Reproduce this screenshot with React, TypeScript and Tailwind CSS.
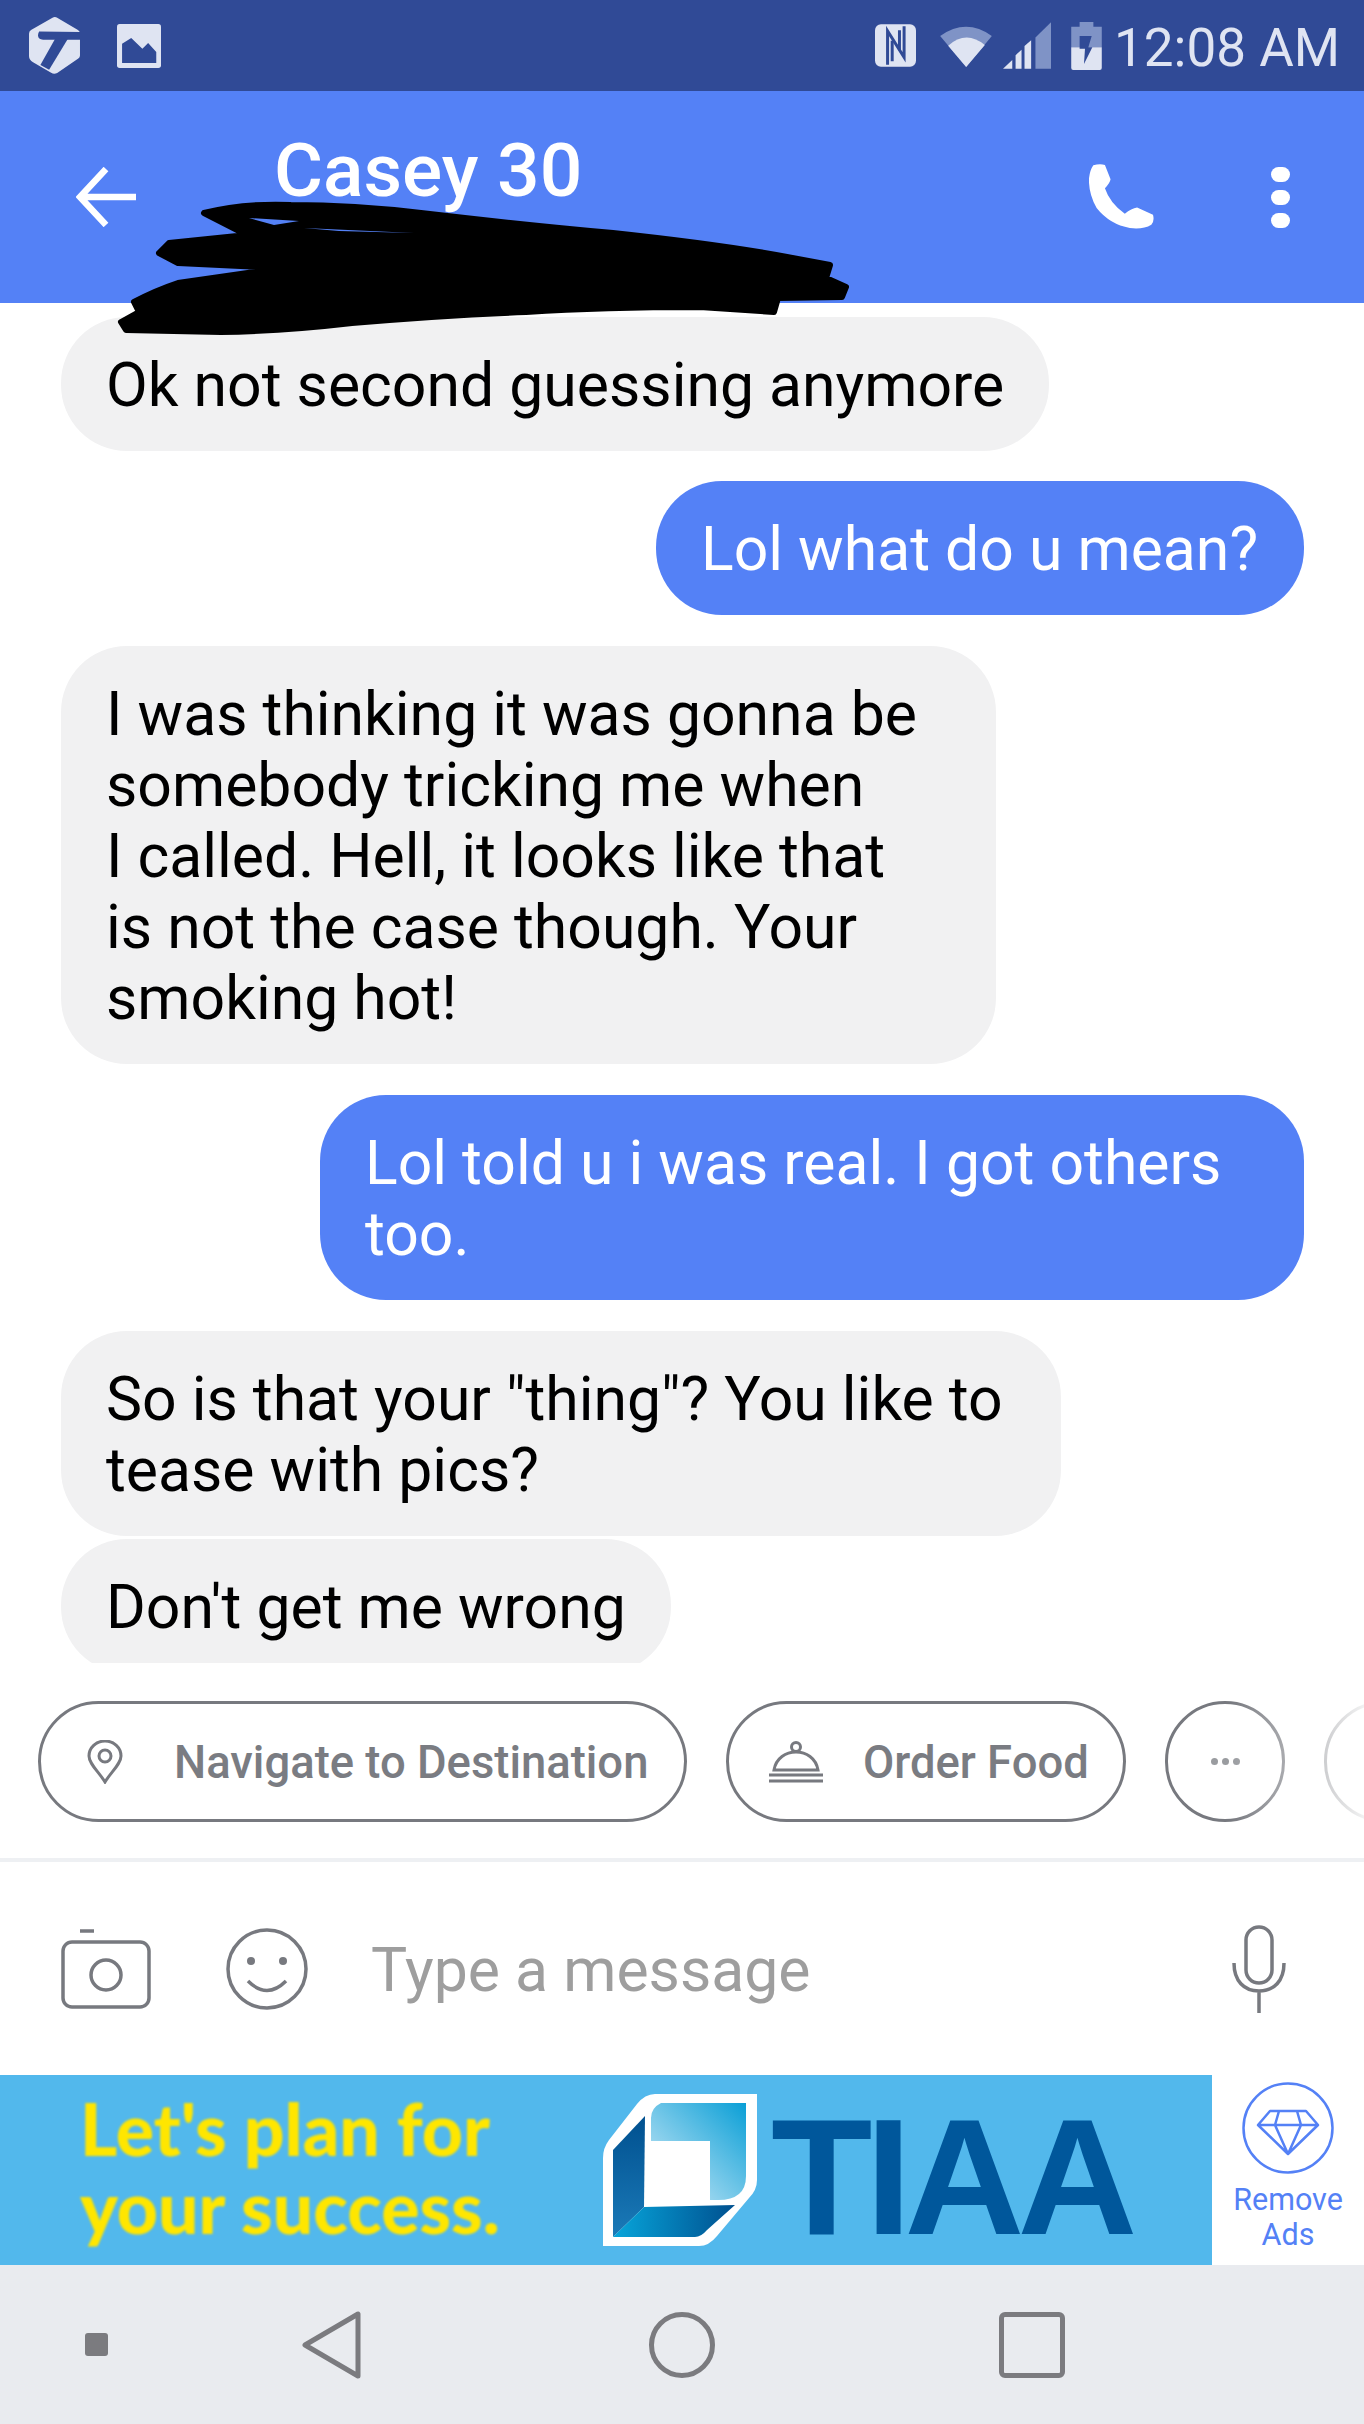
const FONT = "font-['Roboto',sans-serif]";

function StatusBar() {
  return (
    <div className="flex h-[91px] items-center justify-between bg-[#304a96] pl-[29px] pr-[24px] text-[#dfe4f2]">
      <div className="flex items-center gap-[37px]">
        <svg width="51" height="57" viewBox="58 35 152 170">
          <path d="M128 37 Q135 33 142 37 L204 74 Q210 78 210 85 V150 Q210 156 205 159 L142 202 Q132 207 124 201 L70 170 Q58 163 58 152 V85 Q58 78 64 74 Z" fill="#dfe4f2" />
          <path d="M88 78 Q78 100 100 103 H214 V80 Z" fill="#304a96" />
          <path d="M136 100 H174 L118 192 L92 178 Z" fill="#304a96" />
        </svg>
        <svg width="44" height="44" viewBox="0 0 130 130">
          <rect width="130" height="130" rx="8" fill="#dfe4f2" />
          <path d="M15 58 L42 41 L75 73 L92 56 L116 83 V115 H15 Z" fill="#304a96" />
        </svg>
      </div>
      <div className="flex items-center">
        <svg width="41" height="43" viewBox="0 0 124 128" fill="none" className="mr-[24px]">
          <rect width="124" height="128" rx="18" fill="#dfe4f2" />
          <path d="M38 122 V20 L88 100 V6" stroke="#304a96" strokeWidth="9" />
          <path d="M52 112 V50 M74 18 V78" stroke="#304a96" strokeWidth="9" />
        </svg>
        <svg width="52" height="42" viewBox="0 0 155 126" className="mr-[11px]">
          <path d="M0 33 Q78 -22 155 33 L78 126 Z" fill="#7f93c6" />
          <path d="M24 62 Q78 14 134 60 L78 126 Z" fill="#dfe4f2" />
        </svg>
        <svg width="48" height="47" viewBox="0 0 145 141" className="mr-[20px]">
          <path d="M145 0 V141 H98 V46 Z" fill="#7f93c6" />
          <path d="M0 141 L28 114 V141 Z M38 100 L56 83 V141 H38 Z M65 72 L85 55 V141 H65 Z" fill="#dfe4f2" />
        </svg>
        <svg width="31" height="48" viewBox="0 0 91 143" className="mr-[12px]">
          <path d="M25 0 H66 V14 H91 V75 H0 V14 H25 Z" fill="#7f93c6" />
          <path d="M0 75 H91 V137 Q91 143 85 143 H6 Q0 143 0 137 Z" fill="#dfe4f2" />
          <path d="M25 42 H61 L51 75 H63 L38 125 L41 80 H25 Z" fill="#304a96" />
        </svg>
        <span className={`pt-[5px] text-[53px] leading-none ${FONT}`}>12:08 AM</span>
      </div>
    </div>
  );
}

function Header() {
  return (
    <div className="relative flex h-[212px] items-start bg-[#5481f6] text-white">
      <svg width="60" height="60" viewBox="0 0 60 60" className="ml-[76px] mt-[76px] shrink-0" fill="none" stroke="white" strokeWidth="6.5">
        <path d="M60 30 H5 M30 2 L4 30 L30 58" />
      </svg>
      <div className={`ml-[138px] mt-[36px] text-[75px] font-medium leading-[86px] ${FONT}`}>Casey 30</div>
      <svg width="65" height="65" viewBox="87 72 196 196" fill="white" className="absolute left-[1089px] top-[73px]">
        <path d="M100 76 Q120 70 135 75 L152 118 Q150 130 135 145 Q150 190 195 222 Q215 205 232 203 L280 225 Q285 245 275 255 Q250 270 210 265 Q150 255 110 205 Q85 160 87 115 Q90 90 100 76 Z" />
      </svg>
      <div className="absolute left-[1271px] top-[76px] flex flex-col gap-[8px]">
        <div className="h-[15px] w-[19px] rounded-full bg-white" />
        <div className="h-[15px] w-[19px] rounded-full bg-white" />
        <div className="h-[15px] w-[19px] rounded-full bg-white" />
      </div>
      {/* marker scribble over the subtitle, runs a bit past the header */}
      <svg width="760" height="140" viewBox="0 0 760 140" className="absolute left-[104px] top-[110px]">
        <path
          d="M100 12 Q140 2 187 4 Q250 4 317 12 Q420 24 509 32 Q620 44 683 56 L726 64 L722 77 L742 86 L738 96 L674 97 L670 111 L596 106 Q500 106 422 111 Q340 114 248 122 Q180 130 117 131 L22 129 L17 121 L35 111 L30 101 Q50 90 74 82 L178 67 L74 62 L55 52 L65 42 L143 34 Z"
          fill="black"
          stroke="black"
          strokeWidth="6"
          strokeLinejoin="round"
        />
        <path d="M145 17 L195 20 L170 24 Z M200 27 L310 32 L235 30 Z" fill="#5481f6" />
      </svg>
    </div>
  );
}

function Bubble({ mine, className, children }: { mine?: boolean; className?: string; children: React.ReactNode }) {
  return (
    <div
      className={`whitespace-nowrap rounded-[66px] pb-[30px] pl-[45px] pt-[33px] text-[60.7px] leading-[71px] ${FONT} ${
        mine ? 'self-end bg-[#5481f6] text-white' : 'self-start bg-[#f1f1f2] text-black'
      } ${className ?? ''}`}
    >
      {children}
    </div>
  );
}

function Chat() {
  return (
    <div className="flex h-[1360px] flex-col overflow-hidden bg-white pl-[61px] pr-[60px] pt-[14px]">
      <Bubble className="w-[988px]">Ok not second guessing anymore</Bubble>
      <Bubble mine className="mt-[30px] w-[648px]">Lol what do u mean?</Bubble>
      <Bubble className="mt-[31px] w-[935px]">
        I was thinking it was gonna be<br />
        somebody tricking me when<br />
        I called. Hell, it looks like that<br />
        is not the case though. Your<br />
        smoking hot!
      </Bubble>
      <Bubble mine className="mt-[31px] w-[984px]">
        Lol told u i was real. I got others<br />
        too.
      </Bubble>
      <Bubble className="mt-[31px] w-[1000px]">
        So is that your "thing"? You like to<br />
        tease with pics?
      </Bubble>
      <Bubble className="mt-[3px] w-[610px] shrink-0">Don't get me wrong</Bubble>
    </div>
  );
}

function Chip({ className, children }: { className?: string; children: React.ReactNode }) {
  return (
    <div className={`flex h-[121px] shrink-0 items-center rounded-full border-[3.5px] border-[#77797f] ${className ?? ''}`}>
      {children}
    </div>
  );
}

function Chips() {
  return (
    <div className={`relative flex h-[199px] gap-[39px] overflow-hidden border-b-[4px] border-[#eef0f3] bg-white pl-[38px] pt-[38px] text-[45.4px] font-medium text-[#7a7c82] ${FONT}`}>
      <Chip className="w-[649px] pl-[46px]">
        <svg width="36" height="44" viewBox="0 0 36 44" fill="none" stroke="#77797f" strokeWidth="3" className="mr-[51px] shrink-0">
          <path d="M18 42 C12 32 2 24 2 16 A16 15 0 0 1 34 16 C34 24 24 32 18 42 Z" />
          <circle cx="18" cy="16" r="6" />
        </svg>
        <span className="whitespace-nowrap pt-[3px]">Navigate to Destination</span>
      </Chip>
      <Chip className="w-[400px] pl-[40px]">
        <svg width="54" height="42" viewBox="0 0 54 42" fill="none" stroke="#77797f" strokeWidth="3" className="mr-[40px] shrink-0">
          <circle cx="27" cy="6" r="4.5" />
          <path d="M5 29 C7 17 17 11 27 11 C37 11 47 17 49 29 Z" />
          <path d="M0 34 H54 M0 40 H54" />
        </svg>
        <span className="whitespace-nowrap pt-[3px]">Order Food</span>
      </Chip>
      <div className="flex h-[121px] w-[120px] shrink-0 items-center justify-center gap-[4px] rounded-full border-[3.5px] border-[#77797f]">
        <div className="h-[7px] w-[7px] rounded-full bg-[#9a9ca0]" />
        <div className="h-[7px] w-[7px] rounded-full bg-[#9a9ca0]" />
        <div className="h-[7px] w-[7px] rounded-full bg-[#9a9ca0]" />
      </div>
      <div className="h-[121px] w-[120px] shrink-0 rounded-full border-[3.5px] border-[#77797f]" />
      {/* scroll fade at the right edge */}
      <div className="absolute bottom-0 right-0 top-0 w-[134px] bg-gradient-to-r from-white/0 to-white/90" />
    </div>
  );
}

function InputRow() {
  return (
    <div className={`flex h-[213px] items-center bg-white pl-[61px] ${FONT}`}>
      <svg width="90" height="80" viewBox="0 0 90 80" fill="none" stroke="#77797f" strokeWidth="3.5" className="shrink-0">
        <path d="M19 2 H33" />
        <rect x="2" y="13" width="86" height="65" rx="9" />
        <ellipse cx="45" cy="46" rx="15" ry="15" />
      </svg>
      <svg width="82" height="82" viewBox="0 0 82 82" fill="none" stroke="#77797f" strokeWidth="3.5" className="ml-[75px] shrink-0">
        <circle cx="41" cy="41" r="39" />
        <circle cx="25" cy="33" r="4" fill="#77797f" stroke="none" />
        <circle cx="57" cy="33" r="4" fill="#77797f" stroke="none" />
        <path d="M22 53 Q41 72 60 53" />
      </svg>
      <span className="ml-[63px] pt-[6px] text-[60.7px] leading-none text-[#9e9e9e]">Type a message</span>
      <svg width="54" height="88" viewBox="0 0 54 88" fill="none" stroke="#77797f" strokeWidth="3.5" className="ml-auto mr-[78px] shrink-0">
        <rect x="14" y="2" width="26" height="56" rx="13" />
        <path d="M2 38 C2 56 12 66 27 66 C42 66 52 56 52 38 M27 66 V88" />
      </svg>
    </div>
  );
}

function TiaaLogo() {
  return (
    <svg width="154" height="152" viewBox="0 0 154 152" className="shrink-0">
      <defs>
        <linearGradient id="tiaa-top" x1="0" y1="1" x2="1" y2="0">
          <stop offset="0" stopColor="#d4ecf9" />
          <stop offset="1" stopColor="#0a9fd6" />
        </linearGradient>
        <linearGradient id="tiaa-left" x1="0" y1="0" x2="0" y2="1">
          <stop offset="0" stopColor="#00508f" />
          <stop offset="1" stopColor="#1b7ab8" />
        </linearGradient>
        <linearGradient id="tiaa-bottom" x1="0" y1="0" x2="1" y2="0">
          <stop offset="0" stopColor="#07a5da" />
          <stop offset="1" stopColor="#00508f" />
        </linearGradient>
      </defs>
      <path d="M154 0 H52 Q42 0 34 10 L6 46 Q0 54 0 64 V152 H96 Q106 152 114 142 L146 104 Q154 96 154 86 Z" fill="white" />
      <path d="M42 22 L10 56 L10 143 L41 113 Z" fill="url(#tiaa-left)" />
      <path d="M10 143 H92 Q98 143 104 136 L132 111 L41 113 Z" fill="url(#tiaa-bottom)" />
      <path d="M48 9 H143 V82 Q143 106 115 106 H107 V47 H48 V24 Q48 14 58 9 Z" fill="url(#tiaa-top)" />
    </svg>
  );
}

function AdRow() {
  return (
    <div className="flex h-[190px]">
      <div className="flex w-[1212px] items-center bg-[#52b8ec] pl-[80px]">
        <div className="mb-[6px] w-[523px] shrink-0 whitespace-nowrap font-['Lato',sans-serif] text-[71.5px] font-black leading-[78px] text-[#ffe600] blur-[1px]">
          Let's plan for<br />your success.
        </div>
        <TiaaLogo />
        <span className="ml-[14px] mt-[14px] font-['Liberation_Sans',sans-serif] text-[166px] font-bold leading-none tracking-[-7px] text-[#00579b]">
          TIAA
        </span>
      </div>
      <div className="flex flex-1 flex-col items-center bg-white pt-[7px] font-['Roboto',sans-serif] text-[30.5px] leading-[35px] text-[#5481f6]">
        <svg width="92" height="92" viewBox="0 0 92 92" fill="none" stroke="#5481f6" strokeWidth="2.5">
          <circle cx="46" cy="46" r="44.5" />
          <path d="M28 29 H64 L76 43 L46 72 L16 43 Z M16 43 H76 M37 29 L33 43 L46 72 L59 43 L55 29" strokeLinejoin="round" />
        </svg>
        <div className="mt-[8px] text-center">Remove<br />Ads</div>
      </div>
    </div>
  );
}

function NavBar() {
  return (
    <div className="flex h-[159px] items-center bg-[#e9ebef] pl-[85px]">
      <div className="h-[23px] w-[23px] rounded-[3px] bg-[#7b7b7f]" />
      <svg width="60" height="68" viewBox="0 0 60 68" fill="none" stroke="#7b7b7f" strokeWidth="5" strokeLinejoin="round" className="ml-[194px]">
        <path d="M56 3 V65 L3 34 Z" />
      </svg>
      <div className="ml-[287px] h-[66px] w-[66px] rounded-full border-[5px] border-[#7b7b7f]" />
      <div className="ml-[284px] h-[66px] w-[66px] rounded-[6px] border-[5px] border-[#7b7b7f]" />
    </div>
  );
}

export default function App() {
  return (
    <div className="h-[2424px] w-[1364px] overflow-hidden bg-white">
      <StatusBar />
      <Header />
      <Chat />
      <Chips />
      <InputRow />
      <AdRow />
      <NavBar />
    </div>
  );
}
